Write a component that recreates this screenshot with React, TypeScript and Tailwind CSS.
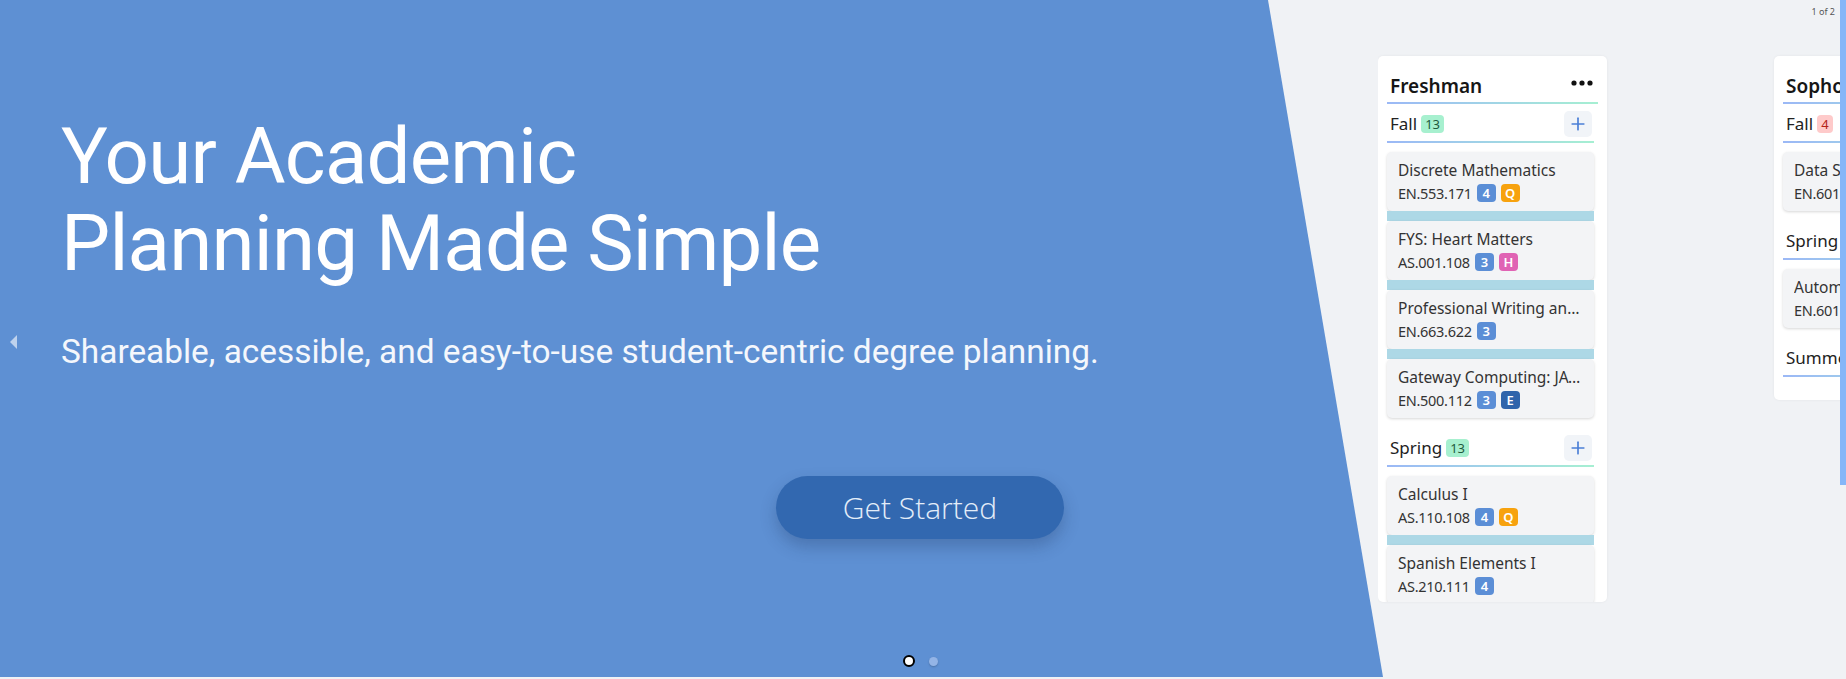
import { Plus } from "lucide-react";

type Tag = { label: string; color: string };

type CourseItem = { title: string; code: string; tags: Tag[] };

const blue = "bg-[#5b8ed6]";

const freshmanFall: CourseItem[] = [
  { title: "Discrete Mathematics", code: "EN.553.171", tags: [{ label: "4", color: blue }, { label: "Q", color: "bg-[#f7a20e]" }] },
  { title: "FYS: Heart Matters", code: "AS.001.108", tags: [{ label: "3", color: blue }, { label: "H", color: "bg-[#e063b4]" }] },
  { title: "Professional Writing and Communication", code: "EN.663.622", tags: [{ label: "3", color: blue }] },
  { title: "Gateway Computing: JAVA", code: "EN.500.112", tags: [{ label: "3", color: blue }, { label: "E", color: "bg-[#2f64ab]" }] },
];

const freshmanSpring: CourseItem[] = [
  { title: "Calculus I", code: "AS.110.108", tags: [{ label: "4", color: blue }, { label: "Q", color: "bg-[#f7a20e]" }] },
  { title: "Spanish Elements I", code: "AS.210.111", tags: [{ label: "4", color: blue }] },
  { title: "Introduction to Psychology", code: "AS.200.101", tags: [{ label: "3", color: blue }, { label: "S", color: "bg-[#3aa76d]" }] },
];

const sophFall: CourseItem[] = [
  { title: "Data Structures", code: "EN.601.226", tags: [{ label: "4", color: blue }] },
];

const sophSpring: CourseItem[] = [
  { title: "Automata & Computation Theory", code: "EN.601.231", tags: [{ label: "3", color: blue }] },
];

const Course = ({ course }: { course: CourseItem }) => {
  return (
    <div className="rounded-[5px] bg-[#f3f4f6] pl-[11px] pr-[12px] pt-[7px] pb-[6px] shadow-[0_1px_3px_rgba(0,0,0,0.16)]">
      <div className="h-[22px] truncate text-[15.5px] leading-[22px] text-[#333]">{course.title}</div>
      <div className="flex h-[24px] items-center gap-[5px] text-[14.5px] leading-[24px] tracking-[-0.02em] text-[#333]">
        <span>{course.code}</span>
        {course.tags.map((t, i) => (
          <span
            key={i}
            className={`flex h-[18px] min-w-[19px] items-center justify-center rounded-[4px] px-[4px] text-[13px] font-semibold leading-none tracking-normal text-white ${t.color}`}
          >
            {t.label}
          </span>
        ))}
      </div>
    </div>
  );
};

const Semester = ({
  name,
  count,
  badge,
  courses,
}: {
  name: string;
  count?: string;
  badge?: string;
  courses: CourseItem[];
}) => {
  return (
    <div className="pr-[4px]">
      <div className="pt-[7px]">
        <div className="flex h-[26px] items-center justify-between pl-[3px] pr-[2px]">
          <div className="flex items-center gap-[4px]">
            <span className="text-[17px] leading-[26px] text-[#222]">{name}</span>
            {count && (
              <span className={`flex h-[18px] items-center rounded-[4px] px-[4px] text-[13px] leading-none ${badge}`}>
                {count}
              </span>
            )}
          </div>
          <button className="flex h-[26px] w-[28px] items-center justify-center rounded-[5px] bg-[#f1f4f8]">
            <Plus size={20} strokeWidth={2} color="#4b7fd6" />
          </button>
        </div>
        <div className="mt-[4px] h-[2px] bg-linear-to-r from-[#9bb8f6] to-[#a6efd2]" />
      </div>
      <div className="pt-[9px] pb-[10px]">
        {courses.map((c, i) => (
          <div key={i}>
            {i > 0 && <div className="h-[10px] bg-[#add8e6]" />}
            <Course course={c} />
          </div>
        ))}
      </div>
    </div>
  );
};

const Dots = () => (
  <svg width="22" height="6" viewBox="0 0 22 6" className="mr-[5px] mb-[6px]">
    <circle cx="3" cy="3" r="2.6" fill="#111" />
    <circle cx="11" cy="3" r="2.6" fill="#111" />
    <circle cx="19" cy="3" r="2.6" fill="#111" />
  </svg>
);

const YearCard = ({ title, children, clip }: { title: string; children: React.ReactNode; clip?: boolean }) => {
  return (
    <div
      className={`w-[229px] shrink-0 rounded-[5px] bg-white px-[9px] pb-[4px] shadow-[0_0_3px_rgba(0,0,0,0.06)] ${
        clip ? "h-[546px] overflow-hidden" : ""
      }`}
    >
      <div className="pt-[17px]">
        <div className="flex h-[26px] items-center justify-between pl-[3px]">
          <span className="text-[19px] font-semibold leading-[26px] text-[#161616]">{title}</span>
          <Dots />
        </div>
        <div className="mt-[3px] h-[2px] bg-linear-to-r from-[#9bb8f6] to-[#a6efd2]" />
      </div>
      {children}
    </div>
  );
};

const App = () => {
  return (
    <div className="flex h-[679px] w-[1846px] overflow-hidden bg-[#f0f2f5]">
      <div className="grid h-full w-[1840px]">
        <div className="col-start-1 row-start-1 h-[677px] bg-[#5e90d3] [clip-path:polygon(0_0,1268px_0,1383px_100%,0_100%)]" />

        <section className="relative col-start-1 row-start-1 flex flex-col font-['Roboto',sans-serif]">
          <svg width="8" height="14" viewBox="0 0 8 14" className="absolute left-[10px] top-[335px]">
            <polygon points="7,0 0,7 7,14" fill="rgba(255,255,255,0.6)" />
          </svg>
          <div className="pl-[61px] pt-[113px]">
            <h1 className="text-[78px] font-normal leading-[87px] tracking-[-0.01em] text-white">
              Your Academic
              <br />
              Planning Made Simple
            </h1>
            <p className="mt-[46px] text-[33.4px] leading-[38px] text-[#f4f7fc]">
              Shareable, acessible, and easy-to-use student-centric degree planning.
            </p>
          </div>
          <div className="mt-[105px] flex justify-center">
            <button className="h-[63px] w-[288px] rounded-full bg-[#3268b0] font-['Open_Sans',sans-serif] text-[30px] font-light text-[#e3edf9] shadow-[0_8px_16px_rgba(20,40,80,0.25)]">
              Get Started
            </button>
          </div>
          <div className="mt-[116px] flex items-center justify-center gap-[14px]">
            <span className="h-[12px] w-[12px] rounded-full border-[2.5px] border-black bg-white" />
            <span className="h-[9px] w-[9px] rounded-full bg-[#93b4e6] shadow-[0_1px_2px_rgba(0,0,0,0.2)]" />
          </div>
        </section>

        <aside className="col-start-1 row-start-1 flex w-[462px] flex-col justify-self-end overflow-hidden font-['Noto_Sans',sans-serif]">
          <div className="pt-[6px] pr-[5px] text-right text-[9px] leading-[12px] text-[#555]">1 of 2</div>
          <div className="mt-[38px] flex items-start gap-[167px]">
            <YearCard title="Freshman" clip>
              <Semester name="Fall" count="13" badge="bg-[#a7f0cf] text-[#1f5a3d]" courses={freshmanFall} />
              <Semester name="Spring" count="13" badge="bg-[#a7f0cf] text-[#1f5a3d]" courses={freshmanSpring} />
            </YearCard>
            <YearCard title="Sophomore">
              <Semester name="Fall" count="4" badge="bg-[#fecaca] text-[#b42318]" courses={sophFall} />
              <Semester name="Spring" count="7" badge="bg-[#a7f0cf] text-[#1f5a3d]" courses={sophSpring} />
              <Semester name="Summer" courses={[]} />
            </YearCard>
          </div>
        </aside>
      </div>
      <div className="w-[6px]">
        <div className="h-[485px] bg-[#86b6f8]" />
      </div>
    </div>
  );
};

export default App;
